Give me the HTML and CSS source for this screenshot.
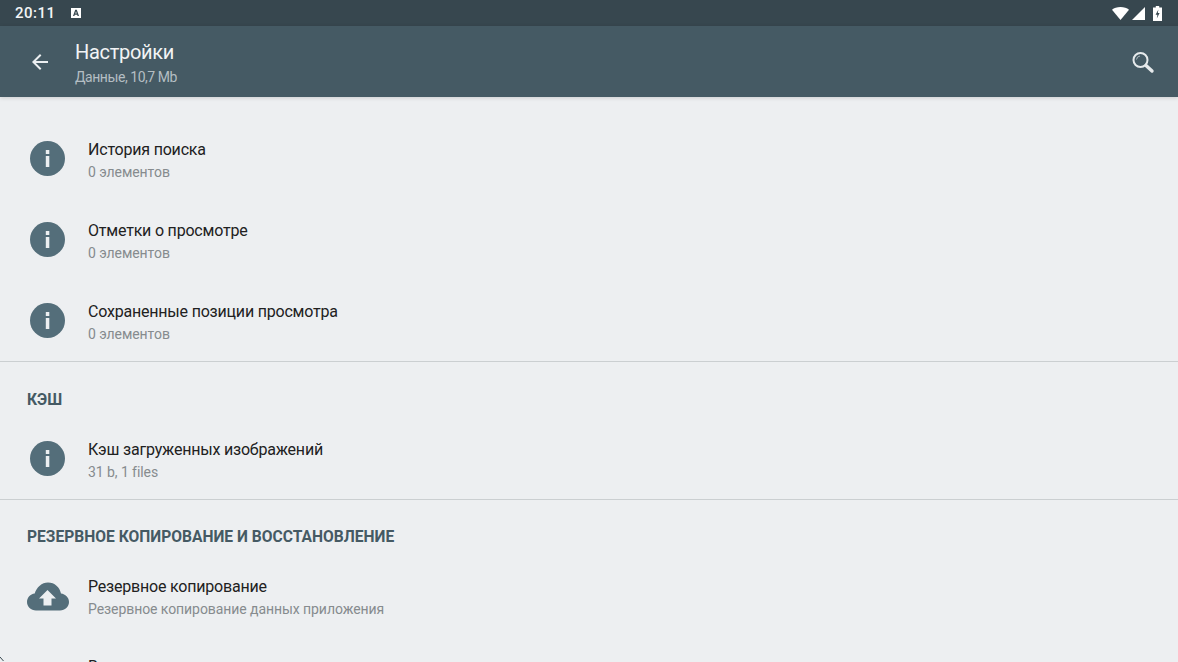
FILE: index.html
```html
<!DOCTYPE html>
<html lang="ru">
<head>
<meta charset="utf-8">
<title>Настройки</title>
<link rel="stylesheet" href="styles.css">
</head>
<body>
<div class="screen">
  <header class="status">
    <span class="clock">20:11</span>
    <svg class="ime" viewBox="0 0 10 10" width="10" height="10"><path fill="#fff" d="M0 0h10v10H0z"/><path fill="#37474f" d="M4.200 1.800h1.600L8 8H6.600l-.4-1.200H3.800L3.400 8H2zM4.300 5.600h1.400L5 3.300z"/></svg>
    <span class="spacer"></span>
    <svg class="wifi" viewBox="0 0 17 13" width="17" height="13"><path fill="#fff" d="M0 2.800C2 1 5 0 8.500 0S15 1 17 2.800L8.500 13z"/></svg>
    <svg class="sig" viewBox="0 0 13 13" width="13" height="13"><path fill="#fff" d="M13 0v13H0z"/></svg>
    <svg class="bat" viewBox="0 0 9 15" width="9" height="15"><path fill="#fff" d="M2.800 0h3.400v1.500H9V15H0V1.500h2.800z"/><path fill="#37474f" d="M5.400 3.500 2.600 8.800h1.800L3.800 12.500 6.600 7H4.800z"/></svg>
  </header>
  <div class="toolbar">
    <svg class="back" viewBox="0 0 24 24" width="24" height="24"><path fill="#eceff1" d="M20 11H7.830l5.590-5.590L12 4l-8 8 8 8 1.410-1.410L7.830 13H20z"/></svg>
    <div class="heading">
      <div class="title">Настройки</div>
      <div class="subtitle">Данные, 10,7 Mb</div>
    </div>
    <svg class="search" viewBox="0 0 24 24" width="24" height="24"><circle cx="9.500" cy="10" r="7" fill="none" stroke="#e6eaec" stroke-width="2"/><path d="M5.500 9.500a4 4 0 0 1 3.500-3.500" fill="none" stroke="#aab6bb" stroke-width="1"/><path d="M15 15.500l6 5.500" stroke="#e6eaec" stroke-width="3.400" stroke-linecap="round"/></svg>
  </div>
  <main class="content">
    <section class="group first">
      <div class="row">
        <svg class="info" viewBox="0 0 35 35" width="35" height="35"><circle cx="17.500" cy="17.500" r="17.500" fill="#546e7a"/><path fill="#eceff1" d="M15.800 9h3.500v4h-3.500zM15.800 15h3.500v11h-3.500z"/></svg>
        <div class="texts"><div class="name">История поиска</div><div class="desc">0 элементов</div></div>
      </div>
      <div class="row">
        <svg class="info" viewBox="0 0 35 35" width="35" height="35"><circle cx="17.500" cy="17.500" r="17.500" fill="#546e7a"/><path fill="#eceff1" d="M15.800 9h3.500v4h-3.500zM15.800 15h3.500v11h-3.500z"/></svg>
        <div class="texts"><div class="name">Отметки о просмотре</div><div class="desc">0 элементов</div></div>
      </div>
      <div class="row">
        <svg class="info" viewBox="0 0 35 35" width="35" height="35"><circle cx="17.500" cy="17.500" r="17.500" fill="#546e7a"/><path fill="#eceff1" d="M15.800 9h3.500v4h-3.500zM15.800 15h3.500v11h-3.500z"/></svg>
        <div class="texts"><div class="name">Сохраненные позиции просмотра</div><div class="desc">0 элементов</div></div>
      </div>
    </section>
    <section class="group">
      <h2 class="label cache">КЭШ</h2>
      <div class="row">
        <svg class="info" viewBox="0 0 35 35" width="35" height="35"><circle cx="17.500" cy="17.500" r="17.500" fill="#546e7a"/><path fill="#eceff1" d="M15.800 9h3.500v4h-3.500zM15.800 15h3.500v11h-3.500z"/></svg>
        <div class="texts"><div class="name">Кэш загруженных изображений</div><div class="desc">31 b, 1 files</div></div>
      </div>
    </section>
    <section class="group">
      <h2 class="label backup">Резервное копирование и восстановление</h2>
      <div class="row">
        <svg class="cloud" viewBox="0 0 42 30" width="42" height="30"><path fill="#546e7a" d="M9 29.500C4 29.500 0 25.700 0 21c0-4.400 3.300-8 7.700-8.500C9.600 6.400 14.800 1.500 21 1.500c6.700 0 11.700 4.700 13 11 4.300.5 8 4 8 8.500 0 4.700-4 8.500-9 8.500z"/><path fill="#eceff1" d="M20.500 9l8.500 8.500h-4.500v7h-8v-7H12z"/></svg>
        <div class="texts"><div class="name">Резервное копирование</div><div class="desc">Резервное копирование данных приложения</div></div>
      </div>
      <div class="row next">
        <span class="icon-gap"></span>
        <div class="texts"><div class="name">Восстановление</div><div class="desc">Восстановление данных приложения</div></div>
      </div>
    </section>
  </main>
  <svg class="cursor" viewBox="0 0 4 5" width="4" height="5"><path d="M0 0l3.500 4" fill="none" stroke="#37474f" stroke-width="1"/></svg>
</div>
</body>
</html>
```
FILE: styles.css
```css
html, body {
  margin: 0;
  padding: 0;
  height: 100%;
  overflow: hidden;
}
body {
  font-family: Roboto, "Noto Sans", sans-serif;
  background: #edeff1;
}
.screen {
  display: flex;
  flex-direction: column;
  height: 662px;
  overflow: hidden;
  position: relative;
}
.status {
  flex: none;
  height: 26px;
  display: flex;
  align-items: center;
  padding: 0 16px 0 15px;
  background: #37474f;
  color: #fff;
}
.clock {
  font-size: 15px;
  letter-spacing: 0.5px;
  font-weight: 500;
  color: #f3f5f6;
}
.ime {
  margin-left: 15px;
}
.spacer {
  flex: 1;
}
.sig {
  margin-left: 3px;
}
.bat {
  margin-left: 8px;
}
.toolbar {
  flex: none;
  height: 71px;
  display: flex;
  align-items: center;
  padding: 0 23px 0 28px;
  background: #455a64;
  box-shadow: 0 1px 4px rgba(0, 0, 0, 0.14);
  position: relative;
  z-index: 1;
}
.heading {
  flex: 1;
  margin-left: 23px;
  padding-top: 3px;
}
.title {
  font-size: 20px;
  line-height: 26px;
  letter-spacing: -0.3px;
  color: #f2f4f5;
}
.subtitle {
  margin-top: 2px;
  font-size: 14px;
  line-height: 20px;
  letter-spacing: -0.45px;
  color: #b4bec3;
}
.content {
  flex: 1;
  overflow: hidden;
}
.group {
  border-top: 1px solid #cbcfd1;
}
.group.first {
  border-top: 0;
  padding-top: 21px;
}
.label {
  margin: 0;
  padding: 27px 27px 9px;
  font-size: 15.6px;
  line-height: 20px;
  font-weight: 700;
  text-transform: uppercase;
  color: #455a64;
}
.label.cache {
  padding-top: 28px;
  padding-bottom: 8px;
}
.label.backup {
  padding-bottom: 8px;
}
.row {
  height: 81px;
  display: flex;
  align-items: center;
  padding-left: 26px;
}
.row.next {
  margin-top: -1px;
}
.info {
  flex: none;
  margin-left: 4px;
  margin-right: 23px;
}
.cloud {
  flex: none;
  margin-left: 1px;
  margin-right: 19px;
}
.icon-gap {
  flex: none;
  width: 62px;
}
.texts {
  min-width: 0;
  padding-top: 4px;
}
.name {
  font-size: 16px;
  line-height: 22px;
  letter-spacing: -0.2px;
  color: #212121;
}
.desc {
  margin-top: 1px;
  font-size: 14px;
  line-height: 20px;
  letter-spacing: -0.07px;
  color: #868b8e;
}
.cursor {
  position: absolute;
  left: 0;
  top: 657px;
}
```
